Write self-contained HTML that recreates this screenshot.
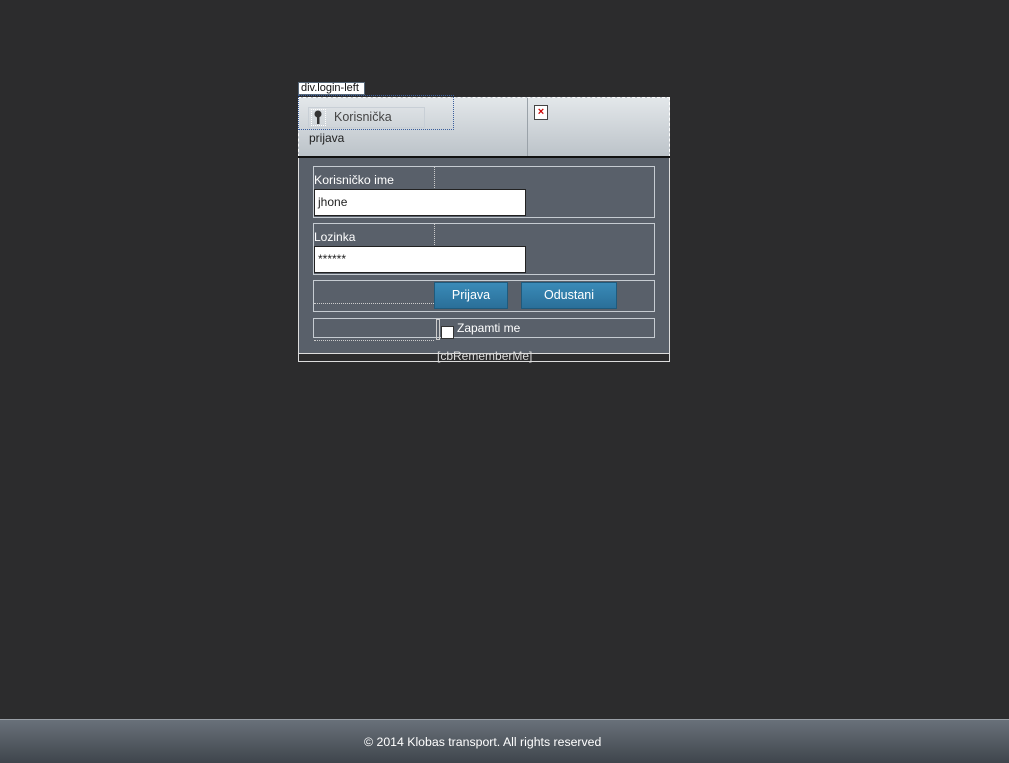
<!DOCTYPE html>
<html><head><style>
*{margin:0;padding:0;box-sizing:border-box}
body{width:1009px;height:763px;background:#2c2c2d;font-family:"Liberation Sans",sans-serif;position:relative;overflow:hidden;font-size:12px}
.a{position:absolute}
.lbl{color:#fff;font-size:12px}
.inp{background:#fff;border:1px solid #222;color:#222;padding:5px 3px;font-size:12px}
.btn{background:linear-gradient(#3a8bb8,#2a6f99);border:1px solid #1f5a7c;color:#fff;text-align:center;font-size:12.5px;line-height:25px}
.box{border:1px solid #c6ccd2}
</style></head><body>
<div class="a" style="left:298px;top:82px;background:#fff;border:1px solid #567;color:#111;font-size:11px;padding:0 2px;line-height:11px;height:13px;width:67px">div.login-left</div>
<div class="a" style="left:298px;top:97px;width:372px;height:60px;background:linear-gradient(#e3e7ea,#bcc3c9);border:1px dashed #fff"></div>
<div class="a" style="left:527px;top:98px;width:1px;height:58px;background:#9aa2a9"></div>
<div class="a" style="left:298px;top:95px;width:156px;height:35px;border:1px dotted #3a5f9e"></div>
<div class="a" style="left:308px;top:107px;width:117px;height:21px;border:1px solid #c8cfd6"></div>
<div class="a" style="left:311px;top:109px;width:15px;height:17px;border:1px dotted #fff"></div>
<svg class="a" style="left:313px;top:110px" width="10" height="15"><circle cx="5" cy="4" r="3.5" fill="#333"/><rect x="4" y="6" width="2.5" height="8" fill="#333"/></svg>
<div class="a" style="left:334px;top:110px;color:#444;font-size:12.5px">Korisnička</div>
<div class="a" style="left:309px;top:131px;color:#222;font-size:12px">prijava</div>
<div class="a" style="left:534px;top:105px;width:14px;height:15px;background:#fff;border:1px solid #444;color:#c00;font-size:11px;font-weight:bold;text-align:center;line-height:12px">×</div>
<div class="a" style="left:298px;top:156px;width:372px;height:2px;background:#111"></div>
<div class="a" style="left:298px;top:158px;width:372px;height:196px;background:#59606a;border-left:1px solid #ddd;border-right:1px solid #ddd"></div>
<div class="a" style="left:298px;top:353px;width:372px;height:9px;border:1px solid #ddd;background:#2c2c2d"></div>
<div class="a box" style="left:313px;top:166px;width:342px;height:52px"></div>
<div class="a lbl" style="left:314px;top:173px;font-size:12.3px">Korisničko ime</div>
<div class="a" style="left:434px;top:167px;height:21px;border-left:1px dotted #ccc"></div>
<div class="a inp" style="left:314px;top:189px;width:212px;height:27px">jhone</div>
<div class="a box" style="left:313px;top:223px;width:342px;height:52px"></div>
<div class="a lbl" style="left:314px;top:230px">Lozinka</div>
<div class="a" style="left:434px;top:224px;height:21px;border-left:1px dotted #ccc"></div>
<div class="a inp" style="left:314px;top:246px;width:212px;height:27px">******</div>
<div class="a box" style="left:313px;top:280px;width:342px;height:32px"></div>
<div class="a" style="left:314px;top:303px;width:120px;border-top:1px dotted #ccc"></div>
<div class="a btn" style="left:434px;top:282px;width:74px;height:27px">Prijava</div>
<div class="a btn" style="left:521px;top:282px;width:96px;height:27px">Odustani</div>
<div class="a box" style="left:313px;top:318px;width:342px;height:20px"></div>
<div class="a" style="left:314px;top:340px;width:120px;border-top:1px dotted #ccc"></div>
<div class="a" style="left:436px;top:319px;width:4px;height:21px;border:1px solid #ccc"></div>
<div class="a" style="left:441px;top:326px;width:13px;height:13px;background:#fff;border:1px solid #333"></div>
<div class="a lbl" style="left:457px;top:321px">Zapamti me</div>
<div class="a" style="left:437px;top:349px;color:#ddd;font-size:12px">[cbRememberMe]</div>
<div class="a" style="left:0;top:719px;width:1009px;height:44px;background:linear-gradient(#69717a,#3f454c);border-top:1px solid #9aa0a6"></div>
<div class="a" style="left:364px;top:735px;color:#fff;font-size:12.3px">© 2014 Klobas transport. All rights reserved</div>
</body></html>
